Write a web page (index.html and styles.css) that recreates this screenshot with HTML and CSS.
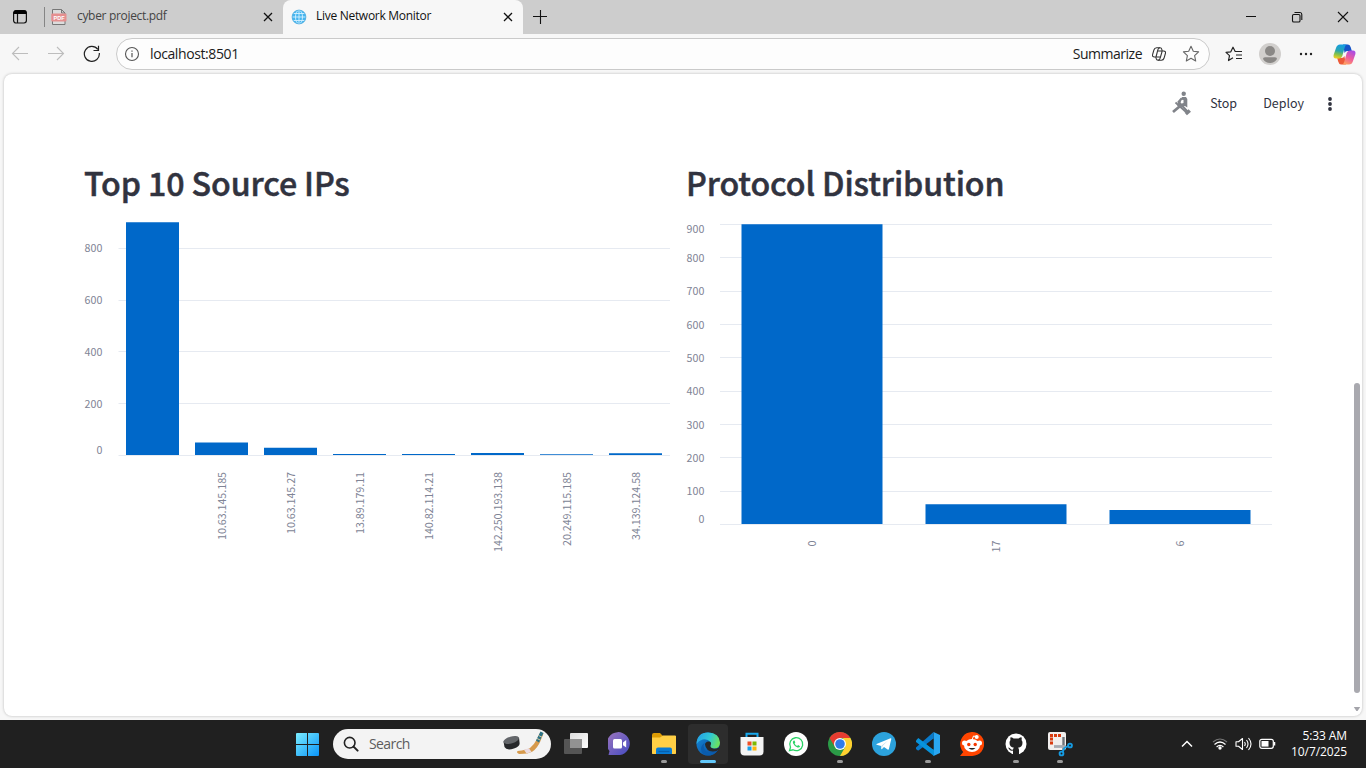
FILE: index.html
```html
<!DOCTYPE html>
<html lang="en">
<head>
<meta charset="utf-8">
<title>Live Network Monitor</title>
<link rel="stylesheet" href="styles.css">
</head>
<body>
<div class="screen">
  <header class="tabstrip">
    <svg class="workspaces" width="16" height="16" viewBox="0 0 16 16"><rect x="1.6" y="1.6" width="12.8" height="12.4" rx="2.4" fill="none" stroke="#111" stroke-width="1.2"/><path d="M1.500 5V3.500Q1.500 1.200 4 1.200h8q2.500 0 2.500 2.300V5z" fill="#000"/><path d="M5.500 5v9" stroke="#111" stroke-width="1.200"/></svg>
    <span class="separator"></span>
    <div class="tab tab-idle">
      <svg width="16" height="18" viewBox="0 0 16 18"><path d="M1.500 10V1.500h9l3.500 3.500V16.500H1.500V10M10.500 1.500V5H14" fill="#dcdcdc" stroke="#777" stroke-width="1"/><rect x=".3" y="5.500" width="15.200" height="8" rx="1" fill="#e58f8f"/><text class="pdf-mark" x="8" y="11.700" text-anchor="middle">PDF</text></svg>
      <span class="tab-title">cyber project.pdf</span>
      <svg class="close" width="10" height="10" viewBox="0 0 10 10"><path d="M1 1l8 8M9 1L1 9" stroke="#111" stroke-width="1.300"/></svg>
    </div>
    <div class="tab tab-active">
      <svg width="16" height="16" viewBox="0 0 16 16"><circle cx="8" cy="8" r="7" fill="#46b5ef"/><g fill="none" stroke="#d5f1ff" stroke-width=".9"><ellipse cx="8" cy="8" rx="3.500" ry="6.800"/><path d="M8 1v14M1 8h14M2.300 4.500h11.400M2.300 11.500h11.400"/></g><circle cx="8" cy="8" r="6.900" fill="none" stroke="#49a9dd" stroke-width=".8"/></svg>
      <span class="tab-title">Live Network Monitor</span>
      <svg class="close" width="10" height="10" viewBox="0 0 10 10"><path d="M1 1l8 8M9 1L1 9" stroke="#111" stroke-width="1.300"/></svg>
    </div>
    <svg class="newtab" width="14" height="14" viewBox="0 0 14 14"><path d="M7.500 0v14M0 6.500h14" stroke="#111" stroke-width="1.100"/></svg>
    <div class="window-buttons">
      <svg width="12" height="12" viewBox="0 0 12 12"><path d="M1 5.500h10" stroke="#111"/></svg>
      <svg width="12" height="12" viewBox="0 0 12 12"><g fill="none" stroke="#111" stroke-width="1.100"><rect x="1.500" y="3.500" width="7.500" height="7.500" rx="1.300"/><path d="M3.500 1.500H9Q10.800 1.500 10.800 3.500V9"/></g></svg>
      <svg width="12" height="12" viewBox="0 0 12 12"><path d="M1 1l10 10M11 1L1 11" stroke="#111" stroke-width="1.100"/></svg>
    </div>
  </header>

  <nav class="toolbar">
    <svg width="18" height="16" viewBox="0 0 18 16"><path d="M17 7.500H1.500M8 1L1.500 7.500 8 14" fill="none" stroke="#bdbdbd" stroke-width="1.100"/></svg>
    <svg class="forward" width="18" height="16" viewBox="0 0 18 16"><path d="M1 7.500h15.500M10 1l6.500 6.500L10 14" fill="none" stroke="#bdbdbd" stroke-width="1.100"/></svg>
    <svg class="reload" width="18" height="18" viewBox="0 0 18 18"><path d="M16.300 8A7.500 7.500 0 1 1 14.800 4.300M15.500.8v4.700h-5" fill="none" stroke="#222" stroke-width="1.200"/></svg>
    <div class="address">
      <svg width="16" height="16" viewBox="0 0 16 16"><circle cx="8" cy="8" r="6.500" fill="none" stroke="#555" stroke-width="1.100"/><path d="M8 7v4.200M8 4.500v1.300" stroke="#555" stroke-width="1.200"/></svg>
      <span class="url">localhost:8501</span>
      <span class="summarize">Summarize</span>
      <svg class="copilot-line" width="16" height="16" viewBox="0 0 16 16"><g fill="none" stroke="#333" stroke-width="1.050" stroke-linejoin="round"><path d="M4.800 11H3.500Q1 11 1.600 8.500L2.900 4Q3.500 1.800 5.600 1.800H9Q10.500 1.800 10.800 3.300L11.200 5h1.500Q15 5 14.400 7.500L13.100 12q-.6 2.200-2.700 2.200H7Q5.500 14.200 5.200 12.700z"/><path d="M9 1.800Q7.300 1.800 6.800 4L5 11M7 14.200q1.700 0 2.200-2.200L11.200 5M6.600 5h4.600M4.800 11h4.600"/></g></svg>
      <svg class="star" width="18" height="18" viewBox="0 0 18 18"><path d="M9 1.300l2.300 5 5.300.6-4 3.700 1.100 5.400L9 13.300 4.300 16l1.100-5.400-4-3.700 5.300-.6z" fill="none" stroke="#666" stroke-width="1.100" stroke-linejoin="round"/></svg>
    </div>
    <svg class="favorites" width="18" height="16" viewBox="0 0 18 16"><path d="M8 11.700L3.500 14.500l1-4.900L1 6.400l4.800-.6L8 1.200l2.200 4.300H17M11 9h6M11 12.500h6" stroke-linejoin="round" fill="none" stroke="#222" stroke-width="1.200"/></svg>
    <svg class="profile" width="22" height="22" viewBox="0 0 22 22"><circle cx="11" cy="11" r="11" fill="#d1cfcd"/><circle cx="11" cy="8" r="5" fill="#8a8886"/><path d="M4 16q0-1.800 2-1.800h10q2 0 2 1.800-2.500 4-7 4t-7-4z" fill="#8a8886"/></svg>
    <svg class="more" width="14" height="4" viewBox="0 0 14 4"><g fill="#222"><circle cx="2" cy="2" r="1.200"/><circle cx="7" cy="2" r="1.200"/><circle cx="12" cy="2" r="1.200"/></g></svg>
    <svg class="copilot" width="23" height="21" viewBox="0 0 23 21">
      <defs>
        <linearGradient id="cpA" x1=".5" y1="0" x2=".3" y2="1"><stop offset="0" stop-color="#149de3"/><stop offset=".45" stop-color="#2aa5b0"/><stop offset=".7" stop-color="#7fc04f"/><stop offset="1" stop-color="#f2d022"/></linearGradient>
        <linearGradient id="cpB" x1=".8" y1="0" x2=".3" y2="1"><stop offset="0" stop-color="#a54be9"/><stop offset=".55" stop-color="#ee5d9c"/><stop offset="1" stop-color="#ffa05e"/></linearGradient>
      </defs>
      <path d="M10 .5h5q2 0 2.800 3L18.800 7h-4.500q-2 0-2.700 2z" fill="#1655c9"/>
      <path d="M13 20.500H8q-2 0-2.800-3L4.200 14h4.500q2 0 2.700-2z" fill="#ec5a38"/>
      <path d="M7 .5h7q-1.500 0-2.300 3L9.300 12Q8.500 14.500 6 14.500H3Q0 14.500.6 11L3 4Q4 .5 7 .5z" fill="url(#cpA)"/>
      <path d="M16 20.500H9q1.500 0 2.300-3L13.700 9Q14.500 6.500 17 6.500h3q3 0 2.400 3.500L20 17q-1 3.500-4 3.500z" fill="url(#cpB)"/>
    </svg>
  </nav>

  <main class="page">
    <div class="app">
      <div class="app-header">
        <svg class="runner" width="20" height="26" viewBox="0 0 20 26"><g fill="#808389"><circle cx="12.700" cy="2.800" r="2.200"/><path d="M11 6h4l1.300 2v8.500L14 15l-6 1.500L6 14z"/></g><path d="M10.500 8.700L9 13l3.500-1v-3z" fill="#fff"/><g fill="none" stroke="#808389"><path d="M10.500 7.500l-3 3.500 9.500 10" stroke-width="2"/><path d="M8.500 15.500L2 21" stroke-width="2.800"/><path d="M4.500 11.500L15 21" stroke-width="1.800"/><path d="M14.800 23l4-3.500" stroke-width="3.500"/></g></svg>
        <span class="stop">Stop</span>
        <span class="deploy">Deploy</span>
        <svg class="kebab" width="6" height="16" viewBox="0 0 6 16"><g fill="#31333f"><circle cx="3" cy="3" r="1.900"/><circle cx="3" cy="8" r="1.900"/><circle cx="3" cy="13" r="1.900"/></g></svg>
      </div>
      <div class="columns">
        <section class="column">
          <h2 class="heading">Top 10 Source IPs</h2>
          <svg class="chart" width="588" height="345" viewBox="84 215 588 345">
            <path class="grid" d="M118.500 248.500H670M118.500 300.500H670M118.500 351.500H670M118.500 403.500H670M118.500 455.500H670"/>
            <g class="bars"><path d="M126 222.300h53V455h-53zM195 442.500h53V455h-53zM264 447.700h53v7.300h-53zM333 454h53v1h-53zM402 454h53v1h-53zM471 453h53v2h-53zM540 454.300h53v.7h-53zM609 453.300h53v1.700h-53z"/></g>
            <g class="axis">
              <text x="84.500" y="252" textLength="18">800</text><text x="84.500" y="304" textLength="18">600</text><text x="84.500" y="356" textLength="18">400</text><text x="84.500" y="408" textLength="18">200</text><text x="96.500" y="454">0</text>
              <text transform="translate(226 540) rotate(-90)" textLength="68">10.63.145.185</text>
              <text transform="translate(295 534) rotate(-90)" textLength="62">10.63.145.27</text>
              <text transform="translate(364 534) rotate(-90)" textLength="62">13.89.179.11</text>
              <text transform="translate(433 540) rotate(-90)" textLength="68">140.82.114.21</text>
              <text transform="translate(502 552) rotate(-90)" textLength="80">142.250.193.138</text>
              <text transform="translate(571 546) rotate(-90)" textLength="74">20.249.115.185</text>
              <text transform="translate(640 540) rotate(-90)" textLength="68">34.139.124.58</text>
            </g>
          </svg>
        </section>
        <section class="column">
          <h2 class="heading">Protocol Distribution</h2>
          <svg class="chart" width="588" height="345" viewBox="686 215 588 345">
            <path class="grid" d="M720 224.500h552M720 257.500h552M720 291.500h552M720 324.500h552M720 357.500h552M720 391.500h552M720 424.500h552M720 457.500h552M720 491.500h552M720 524.500h552"/>
            <g class="bars"><path d="M741.500 224.300h141V524h-141zM925.500 504.300h141V524h-141zM1109.500 510h141v14h-141z"/></g>
            <g class="axis">
              <text x="686.500" y="233" textLength="18">900</text><text x="686.500" y="262" textLength="18">800</text><text x="686.500" y="295" textLength="18">700</text><text x="686.500" y="329" textLength="18">600</text><text x="686.500" y="362" textLength="18">500</text><text x="686.500" y="395" textLength="18">400</text><text x="686.500" y="429" textLength="18">300</text><text x="686.500" y="462" textLength="18">200</text><text x="686.500" y="495" textLength="18">100</text><text x="698.500" y="523">0</text>
              <text transform="translate(816 546.500) rotate(-90)">0</text>
              <text transform="translate(1000 552.500) rotate(-90)" textLength="12">17</text>
              <text transform="translate(1184 546.500) rotate(-90)">6</text>
            </g>
          </svg>
        </section>
      </div>
    </div>
    <div class="scrollbar">
      <span class="thumb"></span>
      <svg width="8" height="6" viewBox="0 0 8 6"><path d="M.8 1h6.400L4.600 5H3.400z" fill="#a4a4aa"/></svg>
    </div>
  </main>

  <footer class="taskbar">
    <svg class="start" width="24" height="24" viewBox="0 0 24 24"><defs><linearGradient id="win" gradientUnits="userSpaceOnUse" x1="0" y1="0" x2="24" y2="24"><stop offset="0" stop-color="#7ff0ff"/><stop offset="1" stop-color="#0a94f8"/></linearGradient></defs><path d="M2 1H12V12H1V2q0-1 1-1zM13 1h10q1 0 1 1v10H13zM1 13h11v11H2q-1 0-1-1zM13 13h11v10q0 1-1 1H13z" fill="url(#win)"/></svg>
    <div class="search">
      <svg width="16" height="16" viewBox="0 0 16 16"><circle cx="6.700" cy="6.700" r="5.300" fill="none" stroke="#222" stroke-width="1.600"/><path d="M10.600 10.600l4 4" stroke="#222" stroke-width="2" stroke-linecap="round"/></svg>
      <span>Search</span>
      <svg class="hockey" width="42" height="26" viewBox="0 0 42 26"><path d="M1.500 10.500L2.500 16q2 4 9.500 1.500 6-2 5.600-5.500L17 6.500z" fill="#26282b"/><ellipse cx="9.200" cy="9" rx="8" ry="3.400" transform="rotate(-17 9.200 9)" fill="#63666a"/><path d="M15.500 20q9-1 12.500-3 4-3 7-9l3.500-7 3 1.500-3 7.500q-3 7-8 10.500-4 2.500-13 2.500-3.500-1-2-3z" fill="#d69a4c"/><path d="M22 18.700l5-1.500 2.500 3.700-5 1.700z" fill="#eadbe1"/><path d="M34 9.500l4.500-9 3 1.500-4.500 9.500z" fill="#2c7387"/><path d="M35 7.500l3.500 1.700M36.500 4.500L40 6.200" stroke="#d9c6a0"/></svg>
    </div>
    <div class="apps">
      <div class="app-slot"><svg width="24" height="24" viewBox="0 0 24 24"><defs><linearGradient id="tv" x1="0" y1="0" x2="1" y2="1"><stop offset="0" stop-color="#ddd"/><stop offset="1" stop-color="#fff"/></linearGradient></defs><rect x="6" y="1" width="18" height="15" rx="1" fill="url(#tv)"/><rect y="7" width="18" height="15" rx="1" fill="#555"/><path d="M6 7h12v9H6z" fill="#929292"/></svg></div>
      <div class="app-slot"><svg width="24" height="24" viewBox="0 0 24 24"><defs><linearGradient id="chat" x1="0" y1="0" x2="1" y2="1"><stop offset="0" stop-color="#9c75bd"/><stop offset="1" stop-color="#454bc1"/></linearGradient></defs><path d="M.5 23l1-4A11.500 11.500 0 1 1 12 23z" fill="url(#chat)"/><rect x="5" y="7" width="9" height="9.500" rx="1.500" fill="#fff"/><path d="M15 10.500L18.200 8v7.500L15 13.200z" fill="#fff"/></svg></div>
      <div class="app-slot running"><svg width="24" height="24" viewBox="0 0 24 24"><path d="M0 3q0-2 2-2h6l3 3H24v17q0 1-1 1H1q-1 0-1-1z" fill="#dd9c05"/><path d="M0 5.500h8l3-2h12q1 0 1 1V21q0 1-1 1H1q-1 0-1-1z" fill="#ffcf45"/><path d="M4 22v-4.500q0-2 2-2h12q2 0 2 2V22z" fill="#087bd3"/><path d="M6.500 19.500h11" stroke="#075eaa" stroke-width="1.300"/></svg></div>
      <div class="app-slot focused"><svg width="24" height="24" viewBox="0 0 24 24"><defs><linearGradient id="edgeA" x1="0" y1=".2" x2="1" y2=".5"><stop offset="0" stop-color="#259fe8"/><stop offset=".55" stop-color="#2fc8d4"/><stop offset="1" stop-color="#6ce25d"/></linearGradient><linearGradient id="edgeB" x1="0" y1="0" x2="1" y2="1"><stop offset="0" stop-color="#1389da"/><stop offset="1" stop-color="#0b4b99"/></linearGradient></defs><circle cx="12" cy="12" r="11.500" fill="url(#edgeB)"/><path d="M.5 12Q1 .5 12 .5 23.500 1 24 10.500q0 6-6 6-5-.3-3.500-3.500 1-1.500 0-3-3-3.500-8-2.500-4 1-6 4.500z" fill="url(#edgeA)"/><path d="M9 12.500q.3-2.700 3.500-3 3 0 2.500 2.500-2 3.500 2 4.500 3 .8 5.500-.8l1 1q-2.500 3-7 2.800-6.500-.5-7.500-7z" fill="#282828"/><path d="M7.500 14q1 6.500 7.500 7 4 .2 7-3-4 5.500-10 5.500-6.500-.5-7-6.500 0-4 5-7-2 1-2.500 4z" fill="#0a5cad"/></svg></div>
      <div class="app-slot"><svg width="24" height="24" viewBox="0 0 24 24"><path d="M6.500 6V1.700h11V6" fill="none" stroke="#17a8ed" stroke-width="2"/><path d="M.5 5h23v14.500q0 4-4 4h-15q-4 0-4-4z" fill="#f4f4f4"/><path fill="#ee4f25" d="M7.500 9.500h4v4h-4z"/><path fill="#7db900" d="M12.500 9.500h4v4h-4z"/><path fill="#18a0e9" d="M7.500 14.500h4v4h-4z"/><path fill="#fdb70a" d="M12.500 14.500h4v4h-4z"/></svg></div>
      <div class="app-slot"><svg width="24" height="24" viewBox="0 0 24 24"><circle cx="12" cy="12" r="12" fill="#fff"/><path d="M5.500 18.700l1-3.500A6.500 6.500 0 1 1 9 17.800z" fill="none" stroke="#2bd366" stroke-width="1.300"/><path d="M9.800 8.500q-1.500 1-.8 2.800 1.300 3 4.500 4.200 2 .5 2.600-1.300l-2-1.200-1 .9q-1.800-.8-2.500-2.500l.7-.8-.8-2z" fill="#2bd366"/></svg></div>
      <div class="app-slot running"><svg width="24" height="24" viewBox="0 0 24 24"><circle cx="12" cy="12" r="12" fill="#2b9b47"/><path d="M1.600 6A12 12 0 0 1 22.400 6H12L7 15z" fill="#e73c31"/><path d="M22.400 6A12 12 0 0 1 12 24l5.200-9L15 6z" fill="#ffd02f"/><circle cx="12" cy="12" r="6" fill="#fff"/><circle cx="12" cy="12" r="4.800" fill="#307be9"/></svg></div>
      <div class="app-slot"><svg width="24" height="24" viewBox="0 0 24 24"><circle cx="12" cy="12" r="12" fill="#2ca2dc"/><path d="M4.500 12L18.500 6.200q1-.2.800.9l-2.400 10q-.3 1.200-1.300.5L12 15l-2 2q-.7.700-.8-.5V14L4.600 12.700q-.6-.3-.1-.7z" fill="#fff"/><path d="M9.200 14L16 8.500 10.500 14 10 17z" fill="#b8dced"/></svg></div>
      <div class="app-slot running"><svg width="24" height="24" viewBox="0 0 24 24"><path d="M17.500 0L24 3v18l-6.500 3z" fill="#29a7f2"/><path d="M0 15.500L17.500 0v7L2.500 18.500Q1.500 18.500 0 17z" fill="#087acb"/><path d="M0 8.500L2.300 6 18 18v6L0 10z" fill="#0793dc"/><path d="M17.500 6.500L10.500 12l7 5.500z" fill="#202121"/></svg></div>
      <div class="app-slot"><svg width="24" height="24" viewBox="0 0 24 24"><path d="M0 24l3.200-4A12 12 0 1 1 12 24z" fill="#ff4500"/><path d="M12 8l1.500-4 3 .7" fill="none" stroke="#fff" stroke-width="1"/><circle cx="16.700" cy="5" r="2" fill="#fff"/><circle cx="4.500" cy="11" r="2.500" fill="#fff"/><circle cx="19.500" cy="11" r="2.500" fill="#fff"/><ellipse cx="12" cy="13.500" rx="8" ry="6.500" fill="#fff"/><circle cx="8.800" cy="12.500" r="1.700" fill="#f43800"/><circle cx="15.200" cy="12.500" r="1.700" fill="#f43800"/><path d="M8.500 16h7q-3.500 3.500-7 0" fill="#222"/></svg></div>
      <div class="app-slot running"><svg width="24" height="24" viewBox="0 0 24 24"><circle cx="12" cy="12" r="10.500" fill="#fff"/><path d="M9 23v-4.500q-3 .7-4-1.500l-1-1.500q2 0 3 2l2 .3q0-1.500 1-2-4.500-.7-4.500-5Q5.500 9 6.500 8q-.4-1.500.1-2.700 1.500 0 3 1.200h5Q16 5.300 17.500 5.300q.5 1.300 0 2.700 1 1.200 1 2.800 0 4.300-4.500 5 1 .7 1 2.200v5z" fill="#222"/></svg></div>
      <div class="app-slot running"><svg class="snip" width="24" height="24" viewBox="0 0 24 24"><rect width="18" height="18" rx="2" fill="#f1efee"/><path d="M2 3.500h11M3.500 5.500v8" fill="none" stroke="#d83b10" stroke-width="3" stroke-dasharray="3 1"/><path d="M15.500 5v13" stroke="#70747a" stroke-width="2.400"/><path d="M6 14.500h12" stroke="#a7abb2" stroke-width="2.800"/><g fill="none" stroke="#159be2" stroke-width="1.900"><circle cx="13.500" cy="21.500" r="1.900"/><circle cx="22" cy="13.500" r="1.900"/><path d="M14.500 20l2-4M16 16l4.500-2"/></g></svg></div>
    </div>
    <div class="tray">
      <svg class="chevron" width="12" height="8" viewBox="0 0 12 8"><path d="M1 6.500L6 1.500l5 5" fill="none" stroke="#fff" stroke-width="1.500"/></svg>
      <svg width="16" height="14" viewBox="0 0 16 14"><g fill="none" stroke-width="1.200"><path d="M1 5q7-6 14 0" stroke="#777"/><path d="M2.500 7.500q5.500-5 11 0M4.600 10q3.400-3.200 6.800 0" stroke="#fff"/></g><circle cx="8" cy="11" r="1.700" fill="#fff"/></svg>
      <svg class="volume" width="18" height="14" viewBox="0 0 18 14"><g fill="none" stroke="#fff" stroke-width="1.100"><path d="M1 4.700h2.500L7.500 1.500v11l-4-3.200H1z" stroke-linejoin="round"/><path d="M9.500 5q1.500 2 0 4M11.500 3q3 4 0 8M13.500 1q5 6 0 12"/></g></svg>
      <svg class="battery" width="17" height="12" viewBox="0 0 17 12"><rect x=".8" y="1.300" width="13.500" height="9" rx="2" fill="none" stroke="#fff" stroke-width="1.200"/><path d="M2.500 3h7v5.600h-7z" fill="#fff"/><path d="M15.500 4v3.500" stroke="#fff" stroke-width="1.500"/></svg>
      <div class="clock"><span>5:33 AM</span><span>10/7/2025</span></div>
    </div>
  </footer>
</div>
</body>
</html>
```
FILE: styles.css
```css
* { box-sizing: border-box; }
body { margin: 0; overflow: hidden; font-family: "Open Sans", "Noto Sans", sans-serif; color: #1b1b1b; }
svg { display: block; flex: none; }
span { white-space: nowrap; }
.screen { width: 1366px; height: 768px; display: flex; flex-direction: column; background: #f7f7f7; }

.tabstrip { height: 34px; flex: none; display: flex; align-items: center; background: #cdcdcd; }
.workspaces { margin-left: 12px; }
.separator { width: 1px; height: 20px; margin-left: 16px; background: #858585; }
.tab { display: flex; align-items: center; height: 34px; font-size: 12px; }
.tab-title { padding-bottom: 3px; }
.tab-idle { width: 238px; padding: 0 10px 0 6px; color: #444; }
.tab-idle .tab-title { margin-left: 10px; letter-spacing: -.32px; }
.pdf-mark { font: bold 5.5px "Liberation Sans", sans-serif; fill: #fff; }
.tab-active { width: 240px; padding: 0 10px 0 8px; background: #f7f7f7; border-radius: 8px 8px 0 0; }
.tab-active .tab-title { margin-left: 9px; letter-spacing: -.29px; color: #111; }
.close { margin-left: auto; }
.newtab { margin-left: 10px; }
.window-buttons { display: flex; gap: 34px; margin-left: auto; margin-right: 17px; }

.toolbar { height: 40px; flex: none; display: flex; align-items: center; padding-left: 11px; background: radial-gradient(circle at 0 0, #f7f7f7 0, #f7f7f7 100%); }
.forward { margin-left: 18px; }
.reload { margin-left: 18px; }
.address { display: flex; align-items: center; width: 1094px; height: 32px; margin-left: 15px; padding: 0 9px 0 7px; border: 1px solid #cacaca; border-radius: 16px; background: #fdfdfd; font-size: 14px; }
.url { margin-left: 10px; padding-bottom: 2px; letter-spacing: -.4px; }
.summarize { margin-left: auto; padding-bottom: 2px; letter-spacing: -.5px; }
.copilot-line { margin-left: 9px; }
.star { margin-left: 15px; }
.favorites { margin-left: 15px; }
.profile { margin-left: 16px; }
.more { margin-left: 18px; }
.copilot { margin-left: 20px; }

.page { display: flex; width: 1358px; height: 642px; flex: none; margin-left: 4px; border-radius: 8px; background: #fff; box-shadow: 0 0 3px rgba(0, 0, 0, .25); }
.app { width: 1349px; font-family: "Noto Sans CJK SC", "Noto Sans", sans-serif; color: #31333f; }
.app-header { display: flex; align-items: center; justify-content: flex-end; height: 60px; padding-right: 20px; font-size: 12.500px; }
.stop { margin-left: 19px; padding-bottom: 3px; }
.deploy { margin-left: 26px; padding-bottom: 3px; }
.kebab { margin-left: 23px; }
.columns { display: grid; grid-template-columns: 588px 588px; column-gap: 14px; padding-left: 80px; }
.heading { height: 81px; margin: 0; padding-top: 23px; font-size: 32.200px; font-weight: 500; line-height: 50px; letter-spacing: -.12px; white-space: nowrap; -webkit-text-stroke: .5px #31333f; }
.chart { overflow: visible; }
.grid { stroke: #e6eaf1; stroke-width: 1; fill: none; }
.bars { fill: #0068c9; }
.axis { font-size: 10.700px; fill: #808495; }
.scrollbar { width: 8px; display: flex; flex-direction: column; align-items: center; padding-top: 309px; }
.thumb { width: 6px; height: 310px; border-radius: 3px; background: #a9a9af; margin-bottom: 13px; }

.taskbar { height: 48px; margin-top: 4px; flex: none; display: flex; align-items: center; padding-left: 295px; background: #202020; color: #fff; }
.search { display: flex; align-items: center; width: 218px; height: 30px; margin-left: 14px; padding: 0 7px 0 10px; border-radius: 15px; background: #f3f3f3; color: #5c5c5c; font-size: 14px; }
.search span { margin-left: 10px; padding-bottom: 1px; letter-spacing: -.6px; }
.hockey { margin-left: auto; }
.apps { display: flex; margin-left: 3px; }
.app-slot { display: flex; flex-direction: column; align-items: center; width: 44px; height: 48px; padding-top: 12px; }
.running::after { content: ""; width: 6px; height: 3px; margin-top: 4px; border-radius: 2px; background: #9b9b9b; }
.focused { width: 40px; height: 40px; margin: 4px 2px; padding-top: 8px; border-radius: 4px; background: #2d2d2d; }
.focused::after { content: ""; width: 16px; height: 3px; margin-top: 4px; border-radius: 2px; background: #62c8fa; }
.snip { overflow: visible; }
.tray { display: flex; align-items: center; margin-left: auto; padding-right: 19px; }
.chevron { margin-right: 19px; }
.volume { margin-left: 7px; }
.battery { margin-left: 6px; }
.clock { display: flex; flex-direction: column; align-items: flex-end; width: 63px; margin-left: 8px; font-size: 12px; line-height: 16px; letter-spacing: -.1px; }
```
